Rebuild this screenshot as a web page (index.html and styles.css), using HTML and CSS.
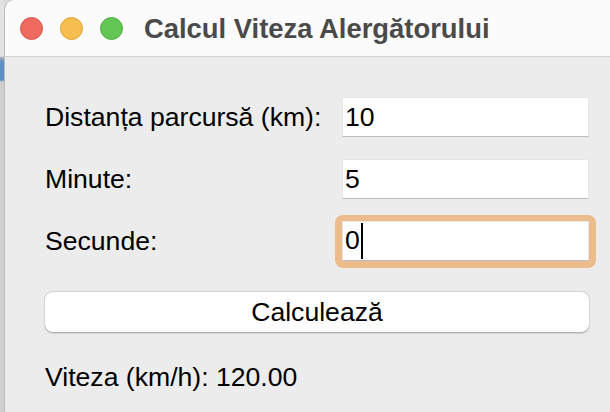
FILE: index.html
```html
<!DOCTYPE html>
<html lang="ro">
<head>
<meta charset="utf-8">
<title>Calcul Viteza Alergătorului</title>
<link rel="stylesheet" href="styles.css">
</head>
<body>
<div class="screen">
  <div class="desktop-strip"></div>
  <div class="window">
    <div class="titlebar">
      <div class="lights">
        <span class="light red"></span>
        <span class="light yellow"></span>
        <span class="light green"></span>
      </div>
      <div class="title">Calcul Viteza Alergătorului</div>
    </div>
    <div class="content">
      <div class="form">
        <label class="label">Distanța parcursă (km):</label>
        <div class="field">10</div>
        <label class="label">Minute:</label>
        <div class="field">5</div>
        <label class="label">Secunde:</label>
        <div class="focus-ring"><div class="field focused">0<span class="caret"></span></div></div>
      </div>
      <button class="button">Calculează</button>
      <div class="result">Viteza (km/h): 120.00</div>
    </div>
  </div>
</div>
</body>
</html>
```
FILE: styles.css
```css
html, body {
  margin: 0;
  padding: 0;
  width: 610px;
  height: 412px;
  overflow: hidden;
  background: #d9d9d9;
}

.screen {
  display: flex;
  width: 610px;
  height: 412px;
  font-family: "Liberation Sans", Arial, sans-serif;
}

.desktop-strip {
  width: 4px;
  flex: none;
  background: linear-gradient(to bottom,
    #e2e2e2 0px, #e2e2e2 56px,
    #9aa9b8 58px, #5e8fc4 62px, #5e8fc4 80px,
    #cfcfcf 82px, #cfcfcf 412px);
}

.window {
  flex: 1;
  display: flex;
  flex-direction: column;
  border-left: 1px solid #bdbdbd;
  border-top-left-radius: 10px;
  overflow: hidden;
  background: #ececec;
}

.titlebar {
  height: 56px;
  flex: none;
  display: flex;
  align-items: center;
  background: #fbfbfb;
  border-bottom: 1px solid #d2d2d2;
  border-top-left-radius: 10px;
}

.lights {
  display: flex;
  gap: 17px;
  margin-left: 15px;
}

.light {
  width: 23px;
  height: 23px;
  border-radius: 50%;
  box-sizing: border-box;
}

.red { background: #ee6a5e; border: 1px solid #d9574c; }
.yellow { background: #f6be4f; border: 1px solid #dea53a; }
.green { background: #62c554; border: 1px solid #50ad43; }

.title {
  margin-left: 21px;
  margin-top: 2px;
  font-size: 27.4px;
  font-weight: bold;
  color: #4a4a4a;
}

.content {
  padding: 40px 21px 0 40px;
}

.form {
  display: grid;
  grid-template-columns: 1fr 247px;
  grid-auto-rows: 40px;
  row-gap: 22px;
  align-items: center;
}

.label {
  font-size: 26.6px;
  color: #000;
}

.field {
  height: 40px;
  box-sizing: border-box;
  background: #fff;
  border: 1px solid #e6e6e6;
  border-bottom: 1px solid #bcbcbc;
  font-size: 26.6px;
  padding-left: 2px;
  color: #000;
  display: flex;
  align-items: center;
}

.focus-ring {
  margin: -7px;
  padding: 6px 7px 7px 7px;
  border-radius: 8px;
  background: #ecbc8c;
}

.caret {
  display: inline-block;
  width: 2px;
  height: 36px;
  background: #000;
  margin-left: 1px;
}

.button {
  display: block;
  width: 100%;
  height: 40px;
  margin-top: 31px;
  background: #fff;
  border: none;
  border-radius: 8px;
  box-shadow: 0 0.5px 2px rgba(0, 0, 0, 0.35);
  font-family: "Liberation Sans", Arial, sans-serif;
  font-size: 26.6px;
  color: #000;
  padding: 0;
}

.result {
  margin-top: 30px;
  font-size: 26.6px;
  line-height: 30px;
  color: #000;
}
```
